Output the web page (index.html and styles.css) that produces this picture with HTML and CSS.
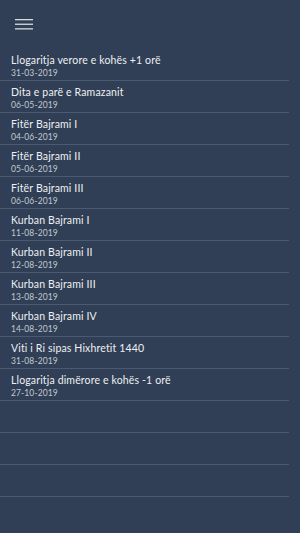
FILE: index.html
```html
<!DOCTYPE html>
<html>
<head>
<meta charset="utf-8">
<link rel="stylesheet" href="styles.css">
</head>
<body>
<div class="app">
  <header class="topbar">
    <svg class="menu" width="18" height="11" viewBox="0 0 18 11">
      <rect x="0" y="0" width="18" height="1.3" fill="#d7dbe2"/>
      <rect x="0" y="4.6" width="18" height="1.3" fill="#d7dbe2"/>
      <rect x="0" y="9.2" width="18" height="1.3" fill="#d7dbe2"/>
    </svg>
  </header>
  <ul class="list">
    <li class="row"><span class="title">Llogaritja verore e kohës +1 orë</span><span class="date">31-03-2019</span></li>
    <li class="row"><span class="title">Dita e parë e Ramazanit</span><span class="date">06-05-2019</span></li>
    <li class="row"><span class="title">Fitër Bajrami I</span><span class="date">04-06-2019</span></li>
    <li class="row"><span class="title">Fitër Bajrami II</span><span class="date">05-06-2019</span></li>
    <li class="row"><span class="title">Fitër Bajrami III</span><span class="date">06-06-2019</span></li>
    <li class="row"><span class="title">Kurban Bajrami I</span><span class="date">11-08-2019</span></li>
    <li class="row"><span class="title">Kurban Bajrami II</span><span class="date">12-08-2019</span></li>
    <li class="row"><span class="title">Kurban Bajrami III</span><span class="date">13-08-2019</span></li>
    <li class="row"><span class="title">Kurban Bajrami IV</span><span class="date">14-08-2019</span></li>
    <li class="row"><span class="title">Viti i Ri sipas Hixhretit 1440</span><span class="date">31-08-2019</span></li>
    <li class="row"><span class="title">Llogaritja dimërore e kohës -1 orë</span><span class="date">27-10-2019</span></li>
    <li class="row empty"></li>
    <li class="row empty"></li>
    <li class="row empty"></li>
  </ul>
</div>
</body>
</html>
```
FILE: styles.css
```css
html, body {
  margin: 0;
  padding: 0;
  background: #303f55;
}
.app {
  width: 300px;
  height: 533px;
  background: #303f55;
  font-family: Lato, "Open Sans", sans-serif;
  color: #ffffff;
  overflow: hidden;
}
.topbar {
  height: 49px;
  box-sizing: border-box;
  padding: 19px 0 0 15px;
}
.menu {
  display: block;
}
.list {
  list-style: none;
  margin: 0;
  padding: 0;
  width: 289px;
}
.row {
  height: 32px;
  box-sizing: border-box;
  border-bottom: 1px solid #4b5a71;
  padding: 5px 0 0 11px;
  display: flex;
  flex-direction: column;
}
.title {
  font-size: 10.5px;
  line-height: 13px;
  color: #eef0f3;
  letter-spacing: 0.15px;
}
.date {
  margin-top: 1px;
  font-size: 8.5px;
  line-height: 11px;
  color: #c3c8d1;
  letter-spacing: 0.1px;
}
```
